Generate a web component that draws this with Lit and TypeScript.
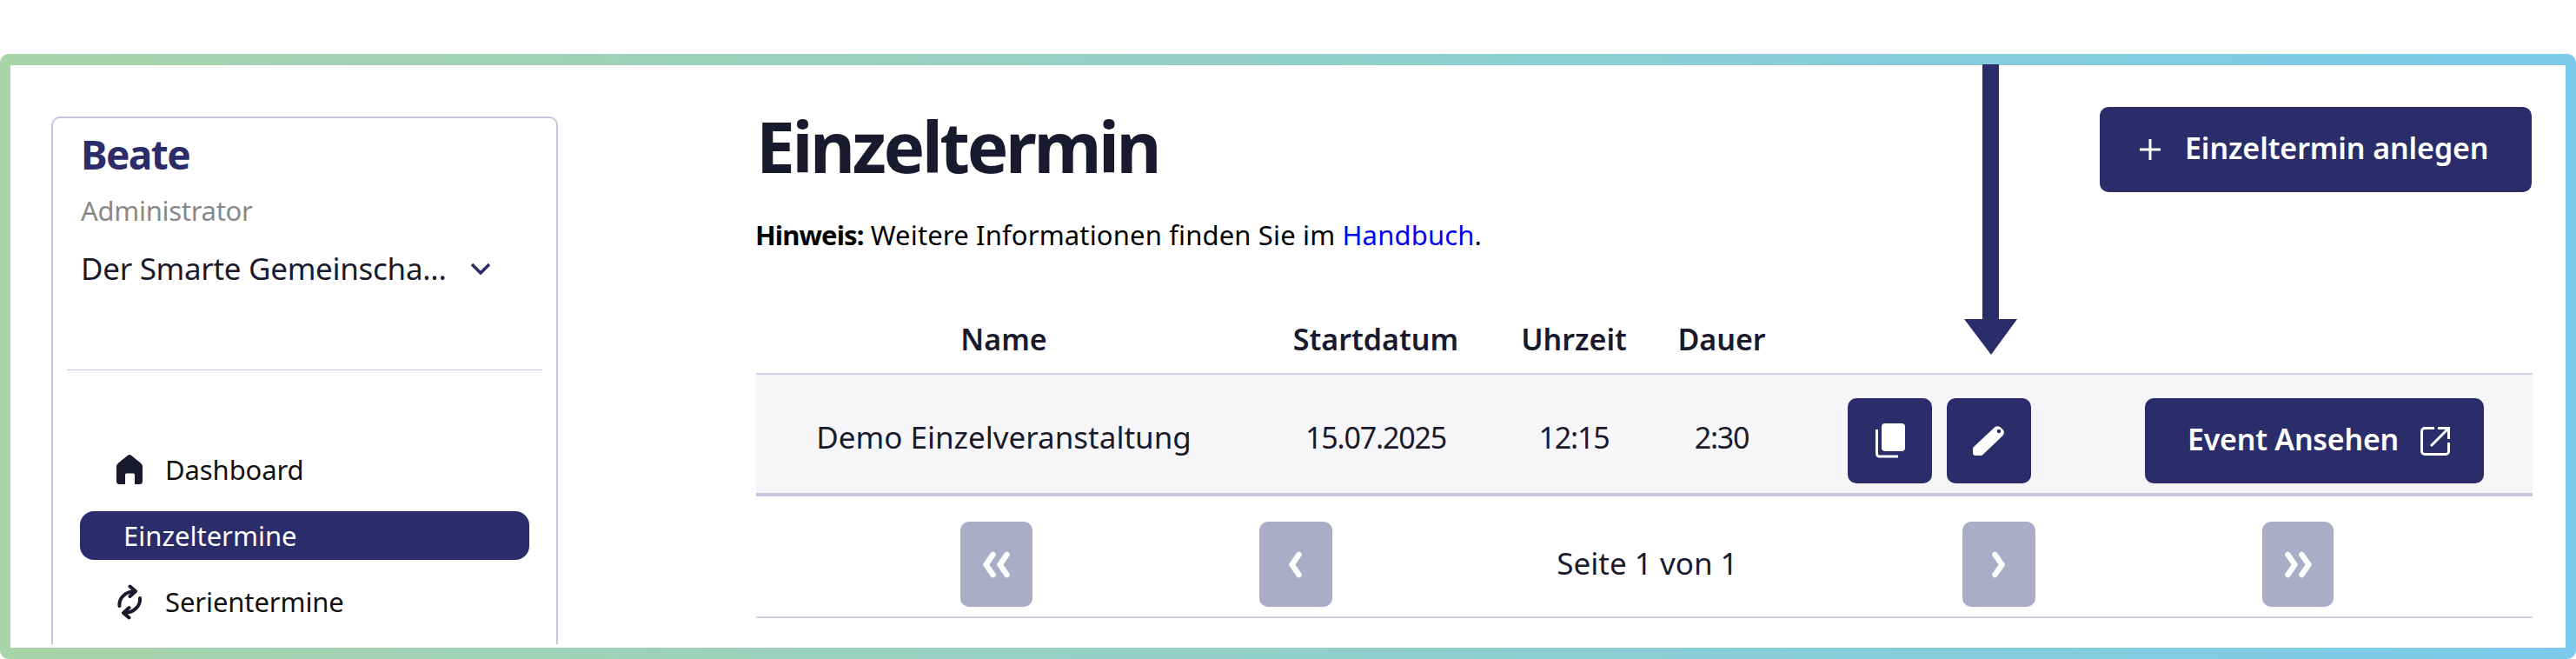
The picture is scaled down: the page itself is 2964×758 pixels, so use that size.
import { LitElement, html, css, svg } from 'lit';
import { customElement } from 'lit/decorators.js';

const homeIcon = svg`<svg class="nav-icon" width="30" height="34" viewBox="0 0 30 34"><path fill="#1a1a2e" d="M12.800 .9a3.500 3.500 0 0 1 4.400 0l10.600 8.700A6 6 0 0 1 30 14.200V30.500a3.500 3.500 0 0 1-3.500 3.500H21V23a1.500 1.500 0 0 0-1.500-1.500h-8A1.500 1.500 0 0 0 10 23V34H3.500A3.500 3.500 0 0 1 0 30.500V14.200a6 6 0 0 1 2.200-4.600z"/></svg>`;

const syncIcon = svg`<svg class="nav-icon" width="30" height="41" viewBox="0 0 30 41" fill="none" stroke="#1a1a2e" stroke-width="4" stroke-linecap="round" stroke-linejoin="round"><path d="M3.500 25C2.500 16 10 8.500 21 8"/><path d="M15.500 2.500 22 8l-6.500 6"/><path d="M27 16C28 25 20 32.500 9 33"/><path d="M14.500 27 8 33l6.500 5.500"/></svg>`;

const copyIcon = svg`<svg width="34" height="40" viewBox="0 0 34 40"><rect x="7" y="0" width="27" height="32" rx="4" fill="#fff"/><path d="M1.500 7V35a3 3 0 0 0 3 3H26" fill="none" stroke="#fff" stroke-width="3"/></svg>`;

const editIcon = svg`<svg width="37" height="34" viewBox="0 0 37 34"><path fill="#fff" d="M1 24 25 1.500Q28-.5 31 1L35 4.500Q37 8 34.500 11L11.500 33Q10.500 34 9 34H3Q0 34 0 31V26Q0 25 1 24z"/><circle cx="30" cy="6" r="2.200" fill="#2b2d6b"/></svg>`;

const openIcon = svg`<svg width="34" height="33" viewBox="0 0 34 33" fill="none" stroke="#fff" stroke-width="3"><path d="M16 1.500H5A3.500 3.500 0 0 0 1.500 5V28A3.500 3.500 0 0 0 5 31.500H29A3.500 3.500 0 0 0 32.500 28V18"/><path d="M12 22 31 3"/><path d="M20 1.500H32.500V14"/></svg>`;

const plusIcon = svg`<svg width="24" height="24" viewBox="0 0 24 24" stroke="#fff" stroke-width="3"><path d="M12 0V24M0 12H24"/></svg>`;

const chevronDown = svg`<svg width="24" height="14" viewBox="0 0 24 14" fill="none" stroke="#2b2d6b" stroke-width="3.500"><path d="M2 2l10 10L22 2"/></svg>`;

const PAGER_WIDTHS = [83, 84, 84, 82];

function pagerIcon(count: number, left: boolean) {
  const width = count === 2 ? 31 : 17;
  const offsets = count === 2 ? [0, 16] : [0];
  return svg`<svg width=${width} height="31" viewBox="0 0 ${width} 31" fill="none" stroke="#fff" stroke-width="6.500" stroke-linecap="round" stroke-linejoin="round">${offsets.map((x) =>
    left
      ? svg`<path d="M${x + 11.5} 4 L${x + 3.5} 15.500 L${x + 11.5} 27"/>`
      : svg`<path d="M${x + 3.5} 4 L${x + 11.5} 15.500 L${x + 3.5} 27"/>`,
  )}</svg>`;
}

@customElement('app-root')
export class AppRoot extends LitElement {
  static override styles = css`
    :host {
      display: block;
      padding-top: 62px;
      font-family: 'Noto Sans', sans-serif;
      color: #1a1a2e;
    }

    .frame {
      position: relative;
      height: 696px;
      box-sizing: border-box;
      padding: 13px 12px;
      border-radius: 10px;
      background: linear-gradient(90deg, #a9d4a9, #7acbec);
    }

    .inner {
      display: flex;
      height: 670px;
      overflow: hidden;
      background: #fff;
    }

    .arrow {
      position: absolute;
      left: 2260px;
      top: 12px;
    }

    /* Sidebar */
    .sidebar {
      box-sizing: border-box;
      flex: none;
      width: 583px;
      height: 607px;
      margin: 59px 0 0 47px;
      padding-top: 13px;
      border: 2px solid #c5c7dd;
      border-bottom: none;
      border-radius: 10px 10px 0 0;
    }

    .user {
      padding-left: 32px;
    }

    .user-name {
      font-size: 46px;
      font-weight: 700;
      line-height: 56px;
      letter-spacing: -1.6px;
      color: #2b2d6b;
    }

    .user-role {
      margin-top: 17px;
      font-size: 31px;
      line-height: 40px;
      letter-spacing: -0.3px;
      color: #888;
    }

    .org {
      display: flex;
      align-items: center;
      gap: 28px;
      margin-top: 25px;
      font-size: 35px;
      line-height: 44px;
      letter-spacing: -0.3px;
    }

    .divider {
      height: 1px;
      margin: 94px 16px 1px;
      background: #c5c7dd;
    }

    .nav {
      display: flex;
      flex-direction: column;
      gap: 20px;
      width: 517px;
      margin: 86px 0 0 31px;
    }

    .nav-item {
      display: flex;
      align-items: center;
      gap: 26px;
      height: 56px;
      padding-left: 42px;
      font-size: 31px;
      letter-spacing: -0.1px;
      color: #111;
    }

    .nav-item.active {
      padding-left: 50px;
      border-radius: 16px;
      background: #2b2d6b;
      color: #fff;
      letter-spacing: 0;
    }

    .nav-icon {
      flex: none;
    }

    /* Main */
    .main {
      box-sizing: border-box;
      flex: none;
      width: 2044px;
      margin-left: 228px;
      padding-top: 45px;
    }

    .head {
      display: flex;
      justify-content: space-between;
      align-items: flex-start;
    }

    h1 {
      margin: 0;
      font-size: 80px;
      font-weight: 700;
      line-height: 96px;
      letter-spacing: -3.4px;
    }

    .hint {
      margin: 34px 0 0 -1px;
      font-size: 31px;
      line-height: 40px;
      letter-spacing: 0.15px;
      color: #000;
    }

    .hint b {
      font-weight: 700;
      letter-spacing: -0.9px;
    }

    .hint a {
      color: #0000ee;
      text-decoration: none;
    }

    .btn {
      display: flex;
      align-items: center;
      justify-content: center;
      box-sizing: border-box;
      height: 98px;
      border-radius: 10px;
      background: #2b2d6b;
      color: #fff;
      font-size: 34px;
      font-weight: 600;
    }

    .btn span {
      padding-bottom: 5px;
      letter-spacing: -0.25px;
    }

    .btn-create {
      justify-content: flex-start;
      gap: 28px;
      width: 497px;
      margin-top: 3px;
      margin-right: 1px;
      padding-left: 46px;
    }

    .btn-create span {
      letter-spacing: -0.1px;
    }

    .btn-icon {
      width: 97px;
    }

    .btn-event {
      justify-content: flex-start;
      gap: 25px;
      width: 390px;
      margin-left: 114px;
      padding-left: 49px;
    }

    .cols {
      display: grid;
      grid-template-columns: 570px 286px 170px 170px 848px;
    }

    .table-head {
      margin-top: 80px;
      padding-bottom: 19px;
      border-bottom: 2px solid #d0d1e3;
      font-size: 34px;
      font-weight: 600;
      line-height: 40px;
      text-align: center;
    }

    .table-row {
      height: 136px;
      border-bottom: 4px solid #c5c7dd;
      background: #f6f6f9;
      font-size: 35px;
      line-height: 44px;
      text-align: center;
    }

    .cell {
      padding-top: 50px;
    }

    .cell.num {
      font-size: 34px;
      letter-spacing: -1.2px;
    }

    .actions {
      display: flex;
      gap: 17px;
      padding: 27px 0 0 60px;
    }

    .pager {
      display: flex;
      align-items: center;
      height: 98px;
      padding: 29px 0 11px 235px;
      border-bottom: 2px solid #d0d1e3;
      font-size: 35px;
    }

    .page-btn {
      display: flex;
      align-items: center;
      justify-content: center;
      height: 98px;
      border-radius: 10px;
      background: #abadc6;
    }

    .page-gap {
      flex: none;
      width: 261px;
    }

    .page-label {
      flex: none;
      width: 725px;
      padding-bottom: 3px;
      text-align: center;
    }
  `;

  private pageBtn(index: number, count: number, left: boolean) {
    return html`<div class="page-btn" style="width:${PAGER_WIDTHS[index]}px">${pagerIcon(count, left)}</div>`;
  }

  override render() {
    return html`
      <div class="frame">
        <div class="inner">
          <aside class="sidebar">
            <div class="user">
              <div class="user-name">Beate</div>
              <div class="user-role">Administrator</div>
              <div class="org">Der Smarte Gemeinscha... ${chevronDown}</div>
            </div>
            <div class="divider"></div>
            <nav class="nav">
              <div class="nav-item">${homeIcon}Dashboard</div>
              <div class="nav-item active">Einzeltermine</div>
              <div class="nav-item">${syncIcon}Serientermine</div>
            </nav>
          </aside>
          <main class="main">
            <div class="head">
              <div>
                <h1>Einzeltermin</h1>
                <p class="hint"><b>Hinweis:</b> Weitere Informationen finden Sie im <a href="#">Handbuch</a>.</p>
              </div>
              <div class="btn btn-create">${plusIcon}<span>Einzeltermin anlegen</span></div>
            </div>
            <div class="cols table-head">
              <div>Name</div>
              <div>Startdatum</div>
              <div>Uhrzeit</div>
              <div>Dauer</div>
              <div></div>
            </div>
            <div class="cols table-row">
              <div class="cell">Demo Einzelveranstaltung</div>
              <div class="cell num">15.07.2025</div>
              <div class="cell num">12:15</div>
              <div class="cell num">2:30</div>
              <div class="actions">
                <div class="btn btn-icon">${copyIcon}</div>
                <div class="btn btn-icon">${editIcon}</div>
                <div class="btn btn-event"><span>Event Ansehen</span>${openIcon}</div>
              </div>
            </div>
            <div class="pager">
              ${this.pageBtn(0, 2, true)}
              <div class="page-gap"></div>
              ${this.pageBtn(1, 1, true)}
              <div class="page-label">Seite 1 von 1</div>
              ${this.pageBtn(2, 1, false)}
              <div class="page-gap"></div>
              ${this.pageBtn(3, 2, false)}
            </div>
          </main>
        </div>
        <svg class="arrow" width="61" height="334" viewBox="0 0 61 334">
          <path fill="#2b2d6b" d="M21 0H40V293H61L31 334 0 293H21z" />
        </svg>
      </div>
    `;
  }
}
